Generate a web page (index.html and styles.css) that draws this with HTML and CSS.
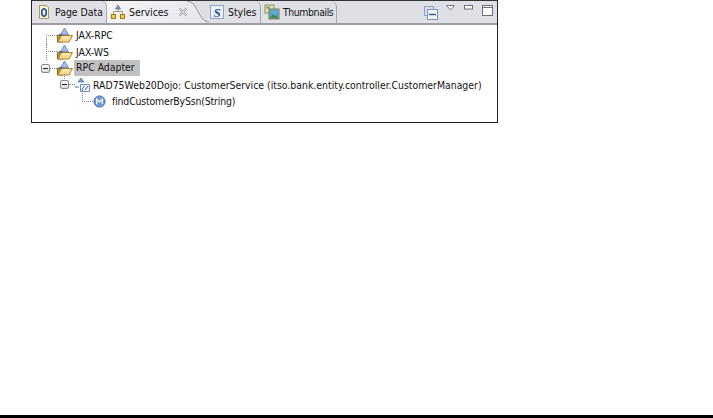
FILE: index.html
```html
<!DOCTYPE html>
<html lang="en">
<head>
    <meta charset="UTF-8">
    <title>Services</title>
    <link rel="stylesheet" href="styles.css">
</head>
<body>
    <div class="panel">
        <div class="tab-bar">
            <div class="tab tab-page">
                <svg class="icon" viewBox="0 0 16 16"><path d="M3.500 1.500h7l2 2v11h-9z" fill="#fbf3d0" stroke="#a89a5a"/><rect x="5.500" y="4.500" width="5" height="8" rx="2.500" fill="#5a7fb8" stroke="#2d4f88"/><rect x="7" y="6.500" width="2" height="4" fill="#fff"/></svg>
                <span>Page Data</span>
            </div>
            <div class="tab tab-active">
                <svg class="icon" viewBox="0 0 16 16"><path d="M3.500 10V7.500h9V10M8 7.500V5" fill="none" stroke="#9a9a80"/><path d="M8 1l2.500 4h-5z" fill="#7f9ed4" stroke="#3b5d9c" stroke-width=".6"/><rect x="1.500" y="10.500" width="4" height="4" fill="#f6cf4a" stroke="#a07a10"/><rect x="10.500" y="10.500" width="4" height="4" fill="#f6cf4a" stroke="#a07a10"/></svg>
                <span>Services</span>
                <svg class="close" viewBox="0 0 10 10"><path d="M1.500 1.500l7 7M8.500 1.500l-7 7" stroke="#a4a4a4" stroke-width="2.200" fill="none"/><path d="M1.500 1.500l7 7M8.500 1.500l-7 7" stroke="#f4f4f4" stroke-width=".8" fill="none"/></svg>
                <svg class="tab-curve" viewBox="0 0 22 21" preserveAspectRatio="none"><path d="M0 0.500C5 0.500 7 2 11 10C14 16 17 20 22 20V0z" fill="#dfdfe6"/><path d="M0 0.500C5 0.500 7 2 11 10C14 16 17 20 22 20" fill="none" stroke="#a2a2aa"/></svg>
            </div>
            <div class="tab tab-styles">
                <svg class="icon" viewBox="0 0 16 16"><rect x="1.500" y="1.500" width="13" height="13" fill="#eef2fa" stroke="#8ea4c8"/><text x="8" y="12.500" class="s-glyph">S</text></svg>
                <span>Styles</span>
            </div>
            <div class="tab tab-thumbs">
                <svg class="icon" viewBox="0 0 16 16"><rect x="1" y="1" width="9" height="8" fill="#d8e4c0" stroke="#a08a50"/><rect x="5" y="5" width="10" height="10" fill="#5aa8d8" stroke="#8a7a40"/><path d="M6 14l3-4 2 2 1-1 2 3z" fill="#3c8a4a"/><rect x="2.500" y="2.500" width="3" height="2" fill="#48a868"/></svg>
                <span>Thumbnails</span>
            </div>
            <div class="tab-tools">
                <svg class="tool-collapse" viewBox="0 0 14 14"><rect x="0.500" y="0.500" width="9" height="9" fill="#d6e0ee" stroke="#8da2c0"/><rect x="3.500" y="3.500" width="10" height="10" fill="#eef3f9" stroke="#7d94b8"/><path d="M5 8.500h7" stroke="#2d5a8c" stroke-width="1.400"/></svg>
                <svg class="tool-menu" viewBox="0 0 9 6"><path d="M0.500 0.500h8l-4 4.500z" fill="#fff" stroke="#7b7b86"/></svg>
                <svg class="tool-min" viewBox="0 0 9 5"><rect x="0.500" y="0.500" width="8" height="3.500" fill="#fff" stroke="#6e6e78"/></svg>
                <svg class="tool-max" viewBox="0 0 11 11"><rect x="0.500" y="0.500" width="10" height="10" fill="#fff" stroke="#6e6e78"/><path d="M0.500 2.500h10" stroke="#6e6e78"/></svg>
            </div>
        </div>

        <ul class="tree">
            <li class="row row-jax row-first">
                <span class="link"></span>
                <svg class="icon" viewBox="0 0 16 16"><use href="#folder"/></svg>
                <span class="label">JAX-RPC</span>
            </li>
            <li class="row row-jax">
                <span class="link"></span>
                <svg class="icon" viewBox="0 0 16 16"><use href="#folder"/></svg>
                <span class="label">JAX-WS</span>
            </li>
            <li class="row row-adapter">
                <span class="toggle"></span>
                <span class="stub"></span>
                <svg class="icon" viewBox="0 0 16 16"><use href="#folder"/></svg>
                <span class="label selected">RPC Adapter</span>
            </li>
            <li class="row row-service">
                <span class="toggle"></span>
                <span class="stub"></span>
                <svg class="icon icon-service" viewBox="0 0 16 16"><path d="M6 1l3 4H3z" fill="#7d9bd0" stroke="#4a6aa8" stroke-width=".7"/><path d="M0 10h4" stroke="#4a6aa8"/><path d="M5.500 7.500h9v7h-9z" fill="#eef3fa" stroke="#6f8fc0"/><path d="M6.500 13l3-4M10 13l3-4" stroke="#3a6aa8"/></svg>
                <span class="label">RAD75Web20Dojo: CustomerService (itso.bank.entity.controller.CustomerManager)</span>
            </li>
            <li class="row row-method">
                <span class="link"></span>
                <svg class="icon icon-method" viewBox="0 0 14 14"><circle cx="7" cy="7" r="6" fill="#6f9bd8" stroke="#3f68a8"/><path d="M4 10V4.500l3 3 3-3V10" fill="none" stroke="#fff" stroke-width="1.300"/></svg>
                <span class="label label-method">findCustomerBySsn(String)</span>
            </li>
        </ul>
    </div>

    <div class="bottom-rule"></div>

    <svg class="defs" width="0" height="0">
        <defs>
            <g id="folder">
                <path d="M0.500 15V8.500L4 7.500h2V15z" fill="#c4942f" stroke="#8a6418"/>
                <path d="M7.500 1L11.500 7.500H3.500z" fill="#a9bde2" stroke="#5a78b4" stroke-width=".8"/>
                <path d="M1 15L4.500 8.500H15.500L12 15z" fill="#f8d88e" stroke="#b08430"/>
                <path d="M4.500 10.500h8" stroke="#fff6dc"/>
                <path d="M2 8h3" stroke="#2d5a9c" stroke-width="1.200"/>
            </g>
        </defs>
    </svg>
</body>
</html>
```

FILE: styles.css
```css
html, body {
    height: 100%;
}

body {
    margin: 0;
    display: flex;
    flex-direction: column;
    background: #fff;
    font-family: "DejaVu Sans", "Noto Sans", sans-serif;
    font-stretch: condensed;
    font-size: 10.4px;
    color: #111;
}

.panel {
    width: 465px;
    height: 122px;
    margin-left: 31px;
    border: 1px solid #222;
    border-top: 0;
    display: flex;
    flex-direction: column;
    background: #fff;
}

.tab-bar {
    height: 22px;
    flex-shrink: 0;
    display: flex;
    align-items: center;
    background: #dfdfe6;
    border-top: 1px solid #333;
    border-bottom: 2px solid #9d9da3;
    white-space: nowrap;
}

.tab {
    display: flex;
    align-items: center;
    height: 100%;
    gap: 3px;
    box-sizing: border-box;
    border-right: 1px solid #a8a8ae;
    border-top-right-radius: 6px;
}

.icon {
    width: 16px;
    height: 16px;
    flex-shrink: 0;
}

.tab-page {
    width: 75px;
    padding-left: 4px;
}

.tab-active {
    width: 102px;
    padding-left: 3px;
    background: linear-gradient(90deg, #f4f4f7 0%, #e6e6ec 100%);
    border-right: 0;
    border-top-right-radius: 0;
    position: relative;
}

.close {
    width: 10px;
    height: 10px;
    margin-left: 7px;
}

.tab-curve {
    position: absolute;
    top: 0;
    right: 0;
    width: 22px;
    height: 100%;
}

.tab-styles {
    width: 52px;
}

.tab-thumbs {
    width: 76px;
    padding-left: 3px;
    letter-spacing: -0.4px;
}

.s-glyph {
    font-family: "Liberation Serif", serif;
    font-weight: bold;
    font-style: italic;
    font-size: 13px;
    fill: #1f4f9c;
    text-anchor: middle;
}

.tab-tools {
    margin-left: auto;
    display: flex;
    align-items: flex-start;
    height: 100%;
    padding-right: 4px;
    padding-top: 4px;
    box-sizing: border-box;
}

.tool-collapse {
    width: 14px;
    height: 14px;
    margin-top: 1px;
}

.tool-menu {
    width: 9px;
    height: 6px;
    margin-left: 8px;
}

.tool-min {
    width: 9px;
    height: 5px;
    margin-left: 9px;
}

.tool-max {
    width: 11px;
    height: 11px;
    margin-left: 9px;
}

.tree {
    list-style: none;
    margin: 0;
    padding: 2px 0 0;
}

.row {
    height: 16.500px;
    display: flex;
    align-items: center;
    white-space: nowrap;
    position: relative;
}

.row-jax {
    padding-left: 14px;
}

.row-adapter {
    padding-left: 9px;
}

.row-service {
    padding-left: 28px;
}

.row-method {
    padding-left: 50px;
}

.link {
    width: 11px;
    height: 0;
    border-top: 1px dotted #888;
    flex-shrink: 0;
}

/* vertical tree lines */
.row-jax::before,
.row-service::before,
.row-method::before {
    content: '';
    position: absolute;
    top: 0;
    bottom: 0;
    border-left: 1px dotted #888;
}

.row-jax::before {
    left: 14px;
}

.row-first::before {
    top: 8px;
}

.row-service::before {
    left: 32px;
    top: -3px;
    bottom: 12px;
}

.row-method::before {
    left: 50px;
    top: -3px;
    bottom: 8px;
}

.toggle {
    width: 9px;
    height: 9px;
    box-sizing: border-box;
    border: 1px solid #888;
    border-radius: 2px;
    background: linear-gradient(#fff, #d8d8d8);
    position: relative;
    flex-shrink: 0;
}

.toggle::after {
    content: '';
    position: absolute;
    left: 1px;
    right: 1px;
    top: 3px;
    height: 1px;
    background: #222;
}

.stub {
    width: 7px;
    height: 0;
    border-top: 1px dotted #888;
    flex-shrink: 0;
}

.row-service .stub {
    width: 6px;
}

.row .icon {
    margin-right: 1px;
}

.row-jax .label {
    margin-left: 2px;
}

.row .icon-service {
    margin-right: 2px;
}

.row .icon-method {
    width: 13px;
    height: 13px;
    margin-right: 6px;
}

.label-method {
    letter-spacing: -0.15px;
}

.selected {
    background: #c0c0c0;
    padding: 1px 5px 3px 2px;
}

.bottom-rule {
    height: 3px;
    background: #000;
    margin-top: auto;
}

.defs {
    position: absolute;
}
```
